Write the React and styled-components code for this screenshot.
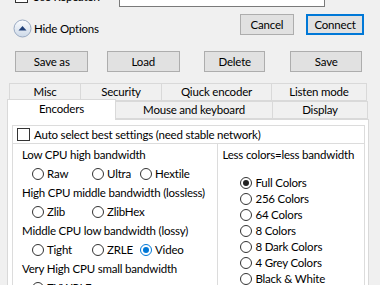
import React from "react";
import styled, { createGlobalStyle } from "styled-components";

const Global = createGlobalStyle`
  html, body { margin: 0; padding: 0; background: #f0f0f0; }
  * { box-sizing: border-box; }
`;

const Window = styled.div`
  width: 380px;
  height: 285px;
  overflow: hidden;
  background: #f0f0f0;
  font-family: Lato, "Noto Sans", sans-serif;
  font-size: 11.5px;
  letter-spacing: -0.2px;
  color: #000;
  display: flex;
  flex-direction: column;
`;

const RepeaterRow = styled.div`
  margin-top: -14px;
  height: 21px;
  flex: none;
  display: flex;
  align-items: center;
  padding-left: 15px;
`;

const CheckLabel = styled.label`
  display: flex;
  align-items: center;
  gap: 4px;
  width: ${(p) => p.$width || "auto"};
  line-height: 16px;
  white-space: nowrap;
`;

const Box = styled.span`
  width: 13px;
  height: 13px;
  border: 1px solid #333;
  background: #fff;
  flex: none;
`;

const TextInput = styled.div`
  width: 206px;
  height: 21px;
  border: 1px solid #7a7a7a;
  background: #fff;
`;

const ControlRow = styled.div`
  margin-top: 7px;
  height: 24px;
  flex: none;
  display: flex;
  align-items: flex-start;
  padding: 0 16px 0 13px;
`;

const HideToggle = styled.div`
  margin-top: 5px;
  display: flex;
  align-items: center;
  gap: 2px;
  line-height: 18px;
`;

const Spacer = styled.div`
  flex: 1;
`;

const DialogButtons = styled.div`
  display: flex;
  gap: 12px;
`;

const Button = styled.button`
  width: ${(p) => p.$w}px;
  height: 21px;
  padding: 0;
  font: inherit;
  letter-spacing: inherit;
  color: #000;
  background: #e1e1e1;
  border: ${(p) => (p.$default ? "2px solid #0078d7" : "1px solid #adadad")};
`;

const ProfileRow = styled.div`
  margin-top: 13px;
  height: 21px;
  flex: none;
  display: grid;
  grid-template-columns: repeat(4, 1fr);
  justify-items: center;
  padding: 0 8px 0 6px;
`;

const TabStrip = styled.div`
  margin-top: 11px;
  flex: none;
  display: flex;
  flex-direction: column;
`;

const BackRow = styled.div`
  display: flex;
  height: 18px;
  margin-left: 9px;
`;

const FrontRow = styled.div`
  display: flex;
  align-items: flex-end;
  height: 18px;
  margin-left: 7px;
`;

const Tab = styled.div`
  width: ${(p) => p.$w}px;
  height: ${(p) => (p.$active ? 21 : 18)}px;
  margin-left: ${(p) => (p.$first ? 0 : -1)}px;
  margin-bottom: ${(p) => (p.$active ? -1 : 0)}px;
  border: 1px solid #d9d9d9;
  border-bottom: ${(p) => (p.$active ? "none" : "1px solid #d9d9d9")};
  background: ${(p) => (p.$active ? "#fff" : "#f0f0f0")};
  position: relative;
  z-index: ${(p) => (p.$active ? 2 : 0)};
  display: flex;
  align-items: center;
  justify-content: center;
  padding-bottom: ${(p) => (p.$active ? 2 : 0)}px;
  line-height: 16px;
  white-space: nowrap;
  flex: none;
`;

const Panel = styled.div`
  margin: 0 11px 0 7px;
  flex: 1;
  border: 1px solid #d9d9d9;
  background: #fff;
  padding: 5px 3px 0 4px;
  display: flex;
  flex-direction: column;
`;

const AutoBox = styled.div`
  height: 19px;
  flex: none;
  border: 1px solid #dcdcdc;
  display: flex;
  align-items: center;
  padding-left: 4px;
`;

const Groups = styled.div`
  margin-top: -1px;
  display: flex;
  flex: 1;
`;

const Group = styled.div`
  width: ${(p) => p.$w}px;
  margin-left: ${(p) => (p.$first ? 0 : -1)}px;
  border: 1px solid #dcdcdc;
  padding-top: 2px;
  display: flex;
  flex-direction: column;
`;

const Caption = styled.div`
  line-height: 18px;
  height: 18px;
  padding-left: ${(p) => p.$pad}px;
  white-space: nowrap;
`;

const RadioRow = styled.div`
  display: grid;
  grid-template-columns: 60px 48px auto;
  height: 19px;
  flex: none;
  align-items: center;
  padding-left: 19px;
  margin-bottom: 1px;
`;

const RadioList = styled.div`
  margin-top: 11px;
  padding-left: 22px;
  display: flex;
  flex-direction: column;
`;

const RadioItem = styled.label`
  display: flex;
  align-items: center;
  gap: 3px;
  height: 16px;
  line-height: 16px;
  white-space: nowrap;
`;

const Circle = styled.span`
  width: 12px;
  height: 12px;
  border-radius: 50%;
  border: 1px solid ${(p) => (p.$checked && p.$blue ? "#0078d7" : "#333")};
  background: #fff;
  display: flex;
  align-items: center;
  justify-content: center;
  flex: none;
  &::after {
    content: "";
    display: ${(p) => (p.$checked ? "block" : "none")};
    width: 6px;
    height: 6px;
    border-radius: 50%;
    background: ${(p) => (p.$blue ? "#0078d7" : "#222")};
  }
`;

const Radio = ({ label, checked, blue }) => (
  <RadioItem>
    <Circle $checked={checked} $blue={blue} />
    {label}
  </RadioItem>
);

const UpIcon = () => (
  <svg width="19" height="19" viewBox="0 0 19 19">
    <defs>
      <linearGradient id="hg" x1="0" y1="0" x2="0" y2="1">
        <stop offset="0" stopColor="#fbfcfe" />
        <stop offset="1" stopColor="#cdd9e8" />
      </linearGradient>
    </defs>
    <circle cx="9.5" cy="9.5" r="8.5" fill="url(#hg)" stroke="#98a9c2" />
    <path d="M5.5 11.5 L13.5 11.5 L9.5 7 Z" fill="#1f3f78" />
  </svg>
);

const encoderSections = [
  { title: "Low CPU high bandwidth", radios: ["Raw", "Ultra", "Hextile"] },
  { title: "High CPU middle bandwidth (lossless)", radios: ["Zlib", "ZlibHex"] },
  { title: "Middle CPU low bandwidth (lossy)", radios: ["Tight", "ZRLE", "Video"] },
  { title: "Very High CPU small bandwidth", radios: ["ZYWRLE"] },
];

const colorOptions = [
  "Full Colors",
  "256 Colors",
  "64 Colors",
  "8 Colors",
  "8 Dark Colors",
  "4 Grey Colors",
  "Black & White",
];

export default function App() {
  return (
    <>
      <Global />
      <Window>
        <RepeaterRow>
          <CheckLabel $width="104px">
            <Box />
            Use Repeater:
          </CheckLabel>
          <TextInput />
        </RepeaterRow>
        <ControlRow>
          <HideToggle>
            <UpIcon />
            Hide Options
          </HideToggle>
          <Spacer />
          <DialogButtons>
            <Button $w={54}>Cancel</Button>
            <Button $w={58} $default>
              Connect
            </Button>
          </DialogButtons>
        </ControlRow>
        <ProfileRow>
          <Button $w={73}>Save as</Button>
          <Button $w={73}>Load</Button>
          <Button $w={61}>Delete</Button>
          <Button $w={72}>Save</Button>
        </ProfileRow>
        <TabStrip>
          <BackRow>
            <Tab $w={72} $first>Misc</Tab>
            <Tab $w={82}>Security</Tab>
            <Tab $w={111}>Qiuck encoder</Tab>
            <Tab $w={96}>Listen mode</Tab>
          </BackRow>
          <FrontRow>
            <Tab $w={109} $first $active>Encoders</Tab>
            <Tab $w={158}>Mouse and keyboard</Tab>
            <Tab $w={96}>Display</Tab>
          </FrontRow>
        </TabStrip>
        <Panel>
          <AutoBox>
            <CheckLabel>
              <Box />
              Auto select best settings (need stable network)
            </CheckLabel>
          </AutoBox>
          <Groups>
            <Group $w={207} $first>
              {encoderSections.map((s) => (
                <React.Fragment key={s.title}>
                  <Caption $pad={9}>{s.title}</Caption>
                  <RadioRow>
                    {s.radios.map((r) => (
                      <Radio key={r} label={r} checked={r === "Video"} blue />
                    ))}
                  </RadioRow>
                </React.Fragment>
              ))}
            </Group>
            <Group $w={148}>
              <Caption $pad={4}>Less colors=less bandwidth</Caption>
              <RadioList>
                {colorOptions.map((c) => (
                  <Radio key={c} label={c} checked={c === "Full Colors"} />
                ))}
              </RadioList>
            </Group>
          </Groups>
        </Panel>
      </Window>
    </>
  );
}
